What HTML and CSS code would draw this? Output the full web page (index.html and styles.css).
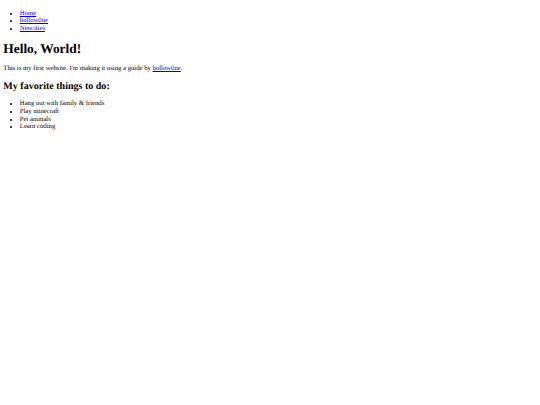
FILE: index.html
```html
<!DOCTYPE html>
<html lang="en">
<head>
<meta charset="utf-8">
<title>Hello, World!</title>
<link rel="stylesheet" href="styles.css">
</head>
<body class="page">
  <ul class="nav">
    <li><a href="#">Home</a></li>
    <li><a href="#">hollow0ne</a></li>
    <li><a href="#">Neocities</a></li>
  </ul>
  <h1 class="title">Hello, World!</h1>
  <p class="intro">This is my first website. I'm making it using a guide by <a href="#">hollow0ne</a>.</p>
  <h2 class="subtitle">My favorite things to do:</h2>
  <ul class="things">
    <li>Hang out with family &amp; friends</li>
    <li>Play minecraft</li>
    <li>Pet animals</li>
    <li>Learn coding</li>
  </ul>
</body>
</html>
```
FILE: styles.css
```css
/* Small, plain document look */
html {
  background: #ffffff;
}

.page {
  margin: 3.3px;
  font-family: "Liberation Serif", "Times New Roman", serif;
  font-size: 6.7px;
  line-height: 1.13;
  color: #000000;
  text-rendering: geometricPrecision;
}

.page a {
  color: #0000ee;
  text-decoration: underline;
}

.nav,
.things {
  margin: 6.4px 0;
  padding-left: 16.5px;
  list-style: disc;
}

.title {
  font-size: 2em;
  font-weight: bold;
  margin: 0.65em 0;
}

.intro {
  margin: 1em 0;
}

.subtitle {
  font-size: 1.5em;
  font-weight: bold;
  margin: 0.83em 0;
}
```
